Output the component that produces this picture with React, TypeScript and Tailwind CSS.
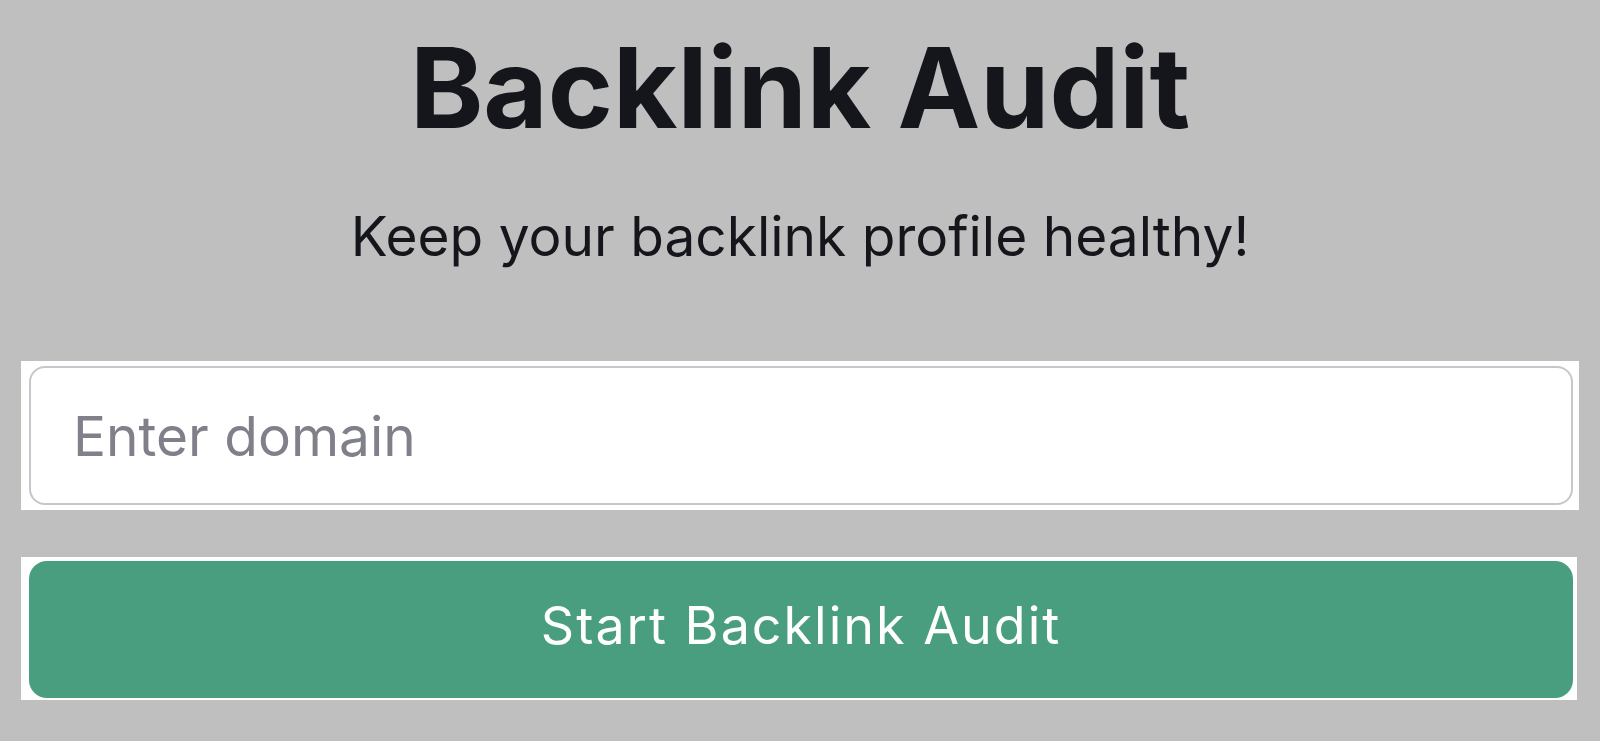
import { useState } from 'react';

export default function App() {
  const [domain, setDomain] = useState('');

  return (
    <div className="min-h-screen bg-[#bfbfbf] pt-8 font-['Inter','Liberation_Sans',sans-serif] text-[#15161b]">
      {/* Heading */}
      <h1 className="text-center text-[111px] leading-none font-bold">Backlink Audit</h1>
      <p className="mt-[66px] text-center text-[55px] leading-none">Keep your backlink profile healthy!</p>

      {/* Domain input */}
      <div className="mx-[21px] mt-[97px] bg-white py-[5px] pl-2 pr-[6px]">
        <input
          type="text"
          value={domain}
          onChange={(e) => setDomain(e.target.value)}
          placeholder="Enter domain"
          className="block h-[139px] w-full rounded-[16px] border-2 border-[#c6c6cc] bg-white pl-[42px] text-[55px] text-[#15161b] outline-none placeholder:text-[#80808a]"
        />
      </div>

      {/* Submit */}
      <div className="ml-[21px] mr-[23px] mt-[47px] bg-white pb-[2px] pl-2 pr-1 pt-1">
        <button className="block h-[137px] w-full rounded-[18px] bg-[#4a9e80] pb-2 text-center text-[52px] leading-none tracking-[2px] text-white">
          Start Backlink Audit
        </button>
      </div>
    </div>
  );
}
